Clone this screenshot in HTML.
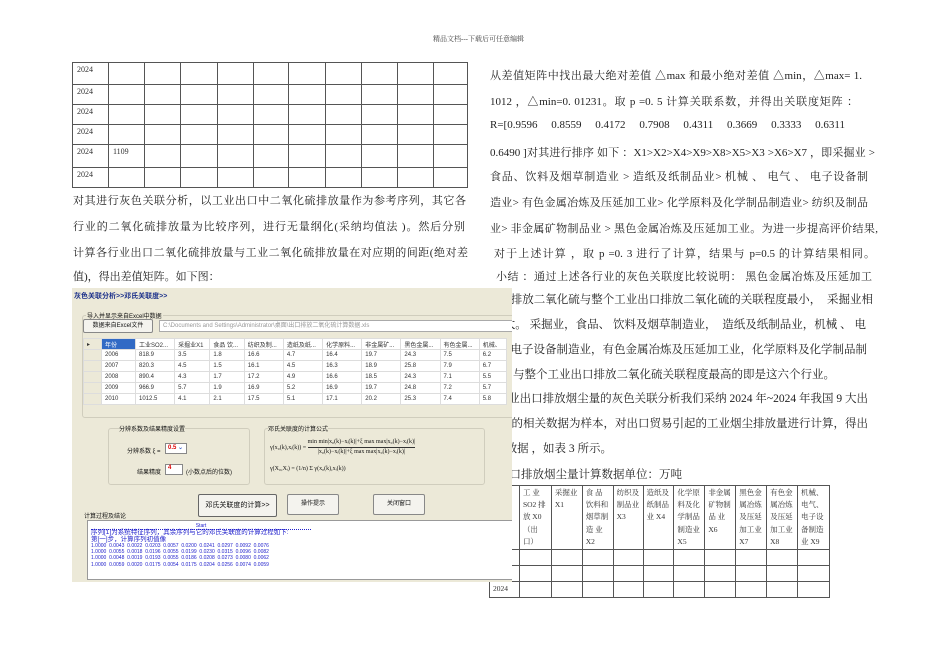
<!DOCTYPE html>
<html><head><meta charset="utf-8"><style>
*{margin:0;padding:0;box-sizing:border-box}
body{width:950px;height:672px;background:#fff;position:relative;overflow:hidden;font-family:"Liberation Serif","Noto Serif CJK SC",serif;color:#222}
.a{position:absolute;white-space:nowrap}
.t{font-size:11px;text-align:justify;text-align-last:justify;overflow:visible}
.r{position:absolute;white-space:nowrap;font-size:11.5px}
table{border-collapse:collapse;position:absolute}
td{border:1px solid #555;font-size:8px;vertical-align:top;padding:2px 4px;font-family:"Liberation Serif","Noto Serif CJK SC",serif;color:#333}
.ss{position:absolute;z-index:5;left:72px;top:288px;width:440px;height:294px;background:#ece9d8;font-family:"Liberation Sans","Noto Sans CJK SC",sans-serif;font-size:6px;color:#111;overflow:hidden}
.ss .a{font-size:6px}
.btn{position:absolute;background:#f4f3ee;border:1px solid #888;border-radius:2px;text-align:center}
.grp{position:absolute;border:1px solid #d0cdbd;border-radius:3px}
.g td{border:1px solid #ddd;font-size:6px;padding:0 3px;height:11px;font-family:"Liberation Sans","Noto Sans CJK SC",sans-serif;color:#333;vertical-align:middle;background:#fff}
.h td{font-size:7.5px;line-height:12.2px;padding:1px 3px;height:16px}
</style></head><body>
<div class="a" style="left:433px;top:34px;font-size:7px;color:#444">精品文档---下载后可任意编辑</div>

<table style="left:72px;top:62px;width:396px">
<colgroup><col style="width:36px"><col style="width:36px"><col style="width:36px"><col style="width:37px"><col style="width:36px"><col style="width:36px"><col style="width:37px"><col style="width:36px"><col style="width:36px"><col style="width:36px"><col style="width:34px"></colgroup>
<tr style="height:22px"><td>2024</td><td></td><td></td><td></td><td></td><td></td><td></td><td></td><td></td><td></td><td></td></tr>
<tr style="height:20px"><td>2024</td><td></td><td></td><td></td><td></td><td></td><td></td><td></td><td></td><td></td><td></td></tr>
<tr style="height:20px"><td>2024</td><td></td><td></td><td></td><td></td><td></td><td></td><td></td><td></td><td></td><td></td></tr>
<tr style="height:20px"><td>2024</td><td></td><td></td><td></td><td></td><td></td><td></td><td></td><td></td><td></td><td></td></tr>
<tr style="height:23px"><td>2024</td><td>1109</td><td></td><td></td><td></td><td></td><td></td><td></td><td></td><td></td><td></td></tr>
<tr style="height:20px"><td>2024</td><td></td><td></td><td></td><td></td><td></td><td></td><td></td><td></td><td></td><td></td></tr>
</table>

<div class="a t" style="left:73px;top:192px;width:393px">对其进行灰色关联分析，以工业出口中二氧化硫排放量作为参考序列，其它各</div>
<div class="a t" style="left:73px;top:218px;width:392px">行业的二氧化硫排放量为比较序列，进行无量纲化(采纳均值法 )。然后分别</div>
<div class="a t" style="left:73px;top:244px;width:395px">计算各行业出口二氧化硫排放量与工业二氧化硫排放量在对应期的间距(绝对差</div>
<div class="a" style="left:73px;top:268px;font-size:11px">值)，得出差值矩阵。如下图：</div>

<div class="a t" style="left:490px;top:67px;width:372px">从差值矩阵中找出最大绝对差值 △max 和最小绝对差值 △min，△max= 1.</div>
<div class="a t" style="left:490px;top:93px;width:368px">1012 ，△min=0. 01231。取 p =0. 5 计算关联系数，并得出关联度矩阵 ：</div>
<div class="a t" style="left:490px;top:119px;width:355px">R=[0.9596 0.8559 0.4172 0.7908 0.4311 0.3669 0.3333 0.6311</div>
<div class="a t" style="left:490px;top:144px;width:385px">0.6490 ]对其进行排序 如下 ：X1&gt;X2&gt;X4&gt;X9&gt;X8&gt;X5&gt;X3 &gt;X6&gt;X7 ，即采掘业 &gt;</div>
<div class="a t" style="left:490px;top:168px;width:378px">食品、饮料及烟草制造业 &gt; 造纸及纸制品业&gt; 机械 、 电气 、 电子设备制</div>
<div class="a t" style="left:490px;top:194px;width:378px">造业&gt; 有色金属冶炼及压延加工业&gt; 化学原料及化学制品制造业&gt; 纺织及制品</div>
<div class="a t" style="left:490px;top:220px;width:388px">业&gt; 非金属矿物制品业 &gt; 黑色金属冶炼及压延加工业。为进一步提高评价结果,</div>
<div class="a t" style="left:494px;top:245px;width:381px">对于上述计算 ，取 p =0. 3 进行了计算，结果与 p=0.5 的计算结果相同。</div>
<div class="a t" style="left:496px;top:268px;width:376px">小结 ：通过上述各行业的灰色关联度比较说明： 黑色金属冶炼及压延加工</div>

<div class="r" style="right:77px;top:291px">黑色金属冶炼及压延加工业出口排放二氧化硫与整个工业出口排放二氧化硫的关联程度最小，&nbsp; 采掘业相</div>
<div class="r" style="right:84px;top:316px">关联度最大。 采掘业，食品、 饮料及烟草制造业，&nbsp; 造纸及纸制品业，机械 、 电</div>
<div class="r" style="right:83px;top:341px">气、电子设备制造业，有色金属冶炼及压延加工业，化学原料及化学制品制</div>
<div class="r" style="right:115px;top:366px">造业&nbsp;&nbsp; 与整个工业出口排放二氧化硫关联程度最高的即是这六个行业。</div>
<div class="r" style="right:82px;top:390px">对工业出口排放烟尘量的灰色关联分析我们采纳 2024 年~2024 年我国 9 大出</div>
<div class="r" style="right:82px;top:415px">口行业的相关数据为样本，对出口贸易引起的工业烟尘排放量进行计算，得出</div>
<div class="r" style="right:338px;top:440px">相关数据 ，如表 3 所示。</div>
<div class="r" style="right:268px;top:466px">表3 工业出口排放烟尘量计算数据单位：万吨</div>

<table class="h" style="left:489px;top:485px;width:341px">
<colgroup><col style="width:30px"><col style="width:32px"><col style="width:31px"><col style="width:31px"><col style="width:30px"><col style="width:31px"><col style="width:31px"><col style="width:31px"><col style="width:31px"><col style="width:31px"><col style="width:32px"></colgroup>
<tr style="height:63px"><td></td><td>工 业 SO2 排 放 X0（出 口）</td><td>采掘业 X1</td><td>食 品 饮料和 烟草制 造 业 X2</td><td>纺织及 制品业 X3</td><td>造纸及 纸制品 业 X4</td><td>化学原 料及化 学制品 制造业 X5</td><td>非金属 矿物制 品 业 X6</td><td>黑色金 属冶炼 及压延 加工业 X7</td><td>有色金 属冶炼 及压延 加工业 X8</td><td>机械、 电气、 电子设 备制造 业 X9</td></tr>
<tr><td></td><td></td><td></td><td></td><td></td><td></td><td></td><td></td><td></td><td></td><td></td></tr>
<tr><td></td><td></td><td></td><td></td><td></td><td></td><td></td><td></td><td></td><td></td><td></td></tr>
<tr><td>2024</td><td></td><td></td><td></td><td></td><td></td><td></td><td></td><td></td><td></td><td></td></tr>
</table>

<div class="ss">
 <div class="a" style="left:2px;top:3px;font-weight:bold;color:#1a2f8a;font-size:7px">灰色关联分析&gt;&gt;邓氏关联度&gt;&gt;</div>
 <div class="grp" style="left:10px;top:27px;width:440px;height:103px"></div>
 <div class="a" style="left:14px;top:23px;background:#ece9d8;padding:0 1px">导入并显示来自Excel中数据</div>
 <div class="btn" style="left:11px;top:31px;width:70px;height:14px;line-height:12px">数据来自Excel文件</div>
 <div style="position:absolute;left:87px;top:32px;width:360px;height:12px;background:#fff;border:1px solid #aaa;color:#999;padding-left:3px;line-height:10px">C:\Documents and Settings\Administrator\桌面\出口排放二氧化硫计算数据.xls</div>
 <table class="g" style="left:11px;top:50px;width:424px;border:1px solid #444">
  <tr><td style="width:18px;background:#ece9d8">▸</td><td style="background:#316ac5;color:#fff;width:34px">年份</td><td>工业SO2...</td><td>采掘业X1</td><td>食品 饮...</td><td>纺织及制...</td><td>造纸及纸...</td><td>化学原料...</td><td>非金属矿...</td><td>黑色金属...</td><td>有色金属...</td><td>机械、</td></tr>
  <tr><td style="background:#ece9d8"></td><td>2006</td><td>818.9</td><td>3.5</td><td>1.8</td><td>16.6</td><td>4.7</td><td>16.4</td><td>19.7</td><td>24.3</td><td>7.5</td><td>6.2</td></tr>
  <tr><td style="background:#ece9d8"></td><td>2007</td><td>820.3</td><td>4.5</td><td>1.5</td><td>16.1</td><td>4.5</td><td>16.3</td><td>18.9</td><td>25.8</td><td>7.9</td><td>6.7</td></tr>
  <tr><td style="background:#ece9d8"></td><td>2008</td><td>890.4</td><td>4.3</td><td>1.7</td><td>17.2</td><td>4.9</td><td>16.6</td><td>18.5</td><td>24.3</td><td>7.1</td><td>5.5</td></tr>
  <tr><td style="background:#ece9d8"></td><td>2009</td><td>966.9</td><td>5.7</td><td>1.9</td><td>16.9</td><td>5.2</td><td>16.9</td><td>19.7</td><td>24.8</td><td>7.2</td><td>5.7</td></tr>
  <tr><td style="background:#ece9d8"></td><td>2010</td><td>1012.5</td><td>4.1</td><td>2.1</td><td>17.5</td><td>5.1</td><td>17.1</td><td>20.2</td><td>25.3</td><td>7.4</td><td>5.8</td></tr>
 </table>
 <div class="grp" style="left:36px;top:140px;width:142px;height:57px"></div>
 <div class="a" style="left:47px;top:136px;background:#ece9d8">分辨系数及结果精度设置</div>
 <div class="a" style="left:55px;top:158px">分辨系数 ξ =</div>
 <div style="position:absolute;left:93px;top:155px;width:22px;height:11px;background:#fff;border:1px solid #888;color:#d00;font-weight:bold;padding-left:2px">0.5 <span style="color:#46c">⌄</span></div>
 <div class="a" style="left:65px;top:179px">结果精度</div>
 <div style="position:absolute;left:93px;top:176px;width:18px;height:11px;background:#fff;border:1px solid #888;color:#d00;font-weight:bold;padding-left:2px">4</div>
 <div class="a" style="left:114px;top:179px">(小数点后的位数)</div>
 <div class="grp" style="left:192px;top:140px;width:221px;height:57px"></div>
 <div class="a" style="left:196px;top:136px;background:#ece9d8">邓氏关联度的计算公式</div>
 <div class="a" style="left:198px;top:150px;font-family:'Liberation Serif',serif;font-size:6px;line-height:9px">γ(x₀(k),xᵢ(k)) = <span style="display:inline-block;text-align:center;vertical-align:middle"><span style="border-bottom:1px solid #333;display:block">min min|x₀(k)−xᵢ(k)|+ξ max max|x₀(k)−xᵢ(k)|</span>|x₀(k)−xᵢ(k)|+ξ max max|x₀(k)−xᵢ(k)|</span></div>
 <div class="a" style="left:198px;top:178px;font-family:'Liberation Serif',serif;font-size:6px">γ(X₀,Xᵢ) = (1/n) Σ γ(x₀(k),xᵢ(k))</div>
 <div class="btn" style="left:126px;top:206px;width:79px;height:23px;line-height:21px;font-size:7px;border-color:#666">邓氏关联度的计算&gt;&gt;</div>
 <div class="btn" style="left:215px;top:206px;width:52px;height:21px;line-height:19px">操作提示</div>
 <div class="btn" style="left:301px;top:206px;width:52px;height:21px;line-height:19px">关闭窗口</div>
 <div class="a" style="left:12px;top:223px">计算过程及结论</div>
 <div style="position:absolute;left:15px;top:232px;width:430px;height:60px;background:#fff;border:1px solid #999;color:#22c;padding:2px 3px;line-height:6.3px">
  <div style="font-size:5px;border-bottom:1px dotted #22c;width:220px;text-align:center">Start</div>
  <div style="font-size:6.5px">序列[1]为系统特征序列，其余序列与它的邓氏关联度的计算过程如下:</div>
  <div style="font-size:6.5px">第[一]步，计算序列初值像</div>
  <div style="font-size:5px">1.0000&nbsp; 0.0043&nbsp; 0.0022&nbsp; 0.0203&nbsp; 0.0057&nbsp; 0.0200&nbsp; 0.0241&nbsp; 0.0297&nbsp; 0.0092&nbsp; 0.0076</div>
  <div style="font-size:5px">1.0000&nbsp; 0.0055&nbsp; 0.0018&nbsp; 0.0196&nbsp; 0.0055&nbsp; 0.0199&nbsp; 0.0230&nbsp; 0.0315&nbsp; 0.0096&nbsp; 0.0082</div>
  <div style="font-size:5px">1.0000&nbsp; 0.0048&nbsp; 0.0019&nbsp; 0.0193&nbsp; 0.0055&nbsp; 0.0186&nbsp; 0.0208&nbsp; 0.0273&nbsp; 0.0080&nbsp; 0.0062</div>
  <div style="font-size:5px">1.0000&nbsp; 0.0059&nbsp; 0.0020&nbsp; 0.0175&nbsp; 0.0054&nbsp; 0.0175&nbsp; 0.0204&nbsp; 0.0256&nbsp; 0.0074&nbsp; 0.0059</div>
 </div>
</div>
</body></html>
